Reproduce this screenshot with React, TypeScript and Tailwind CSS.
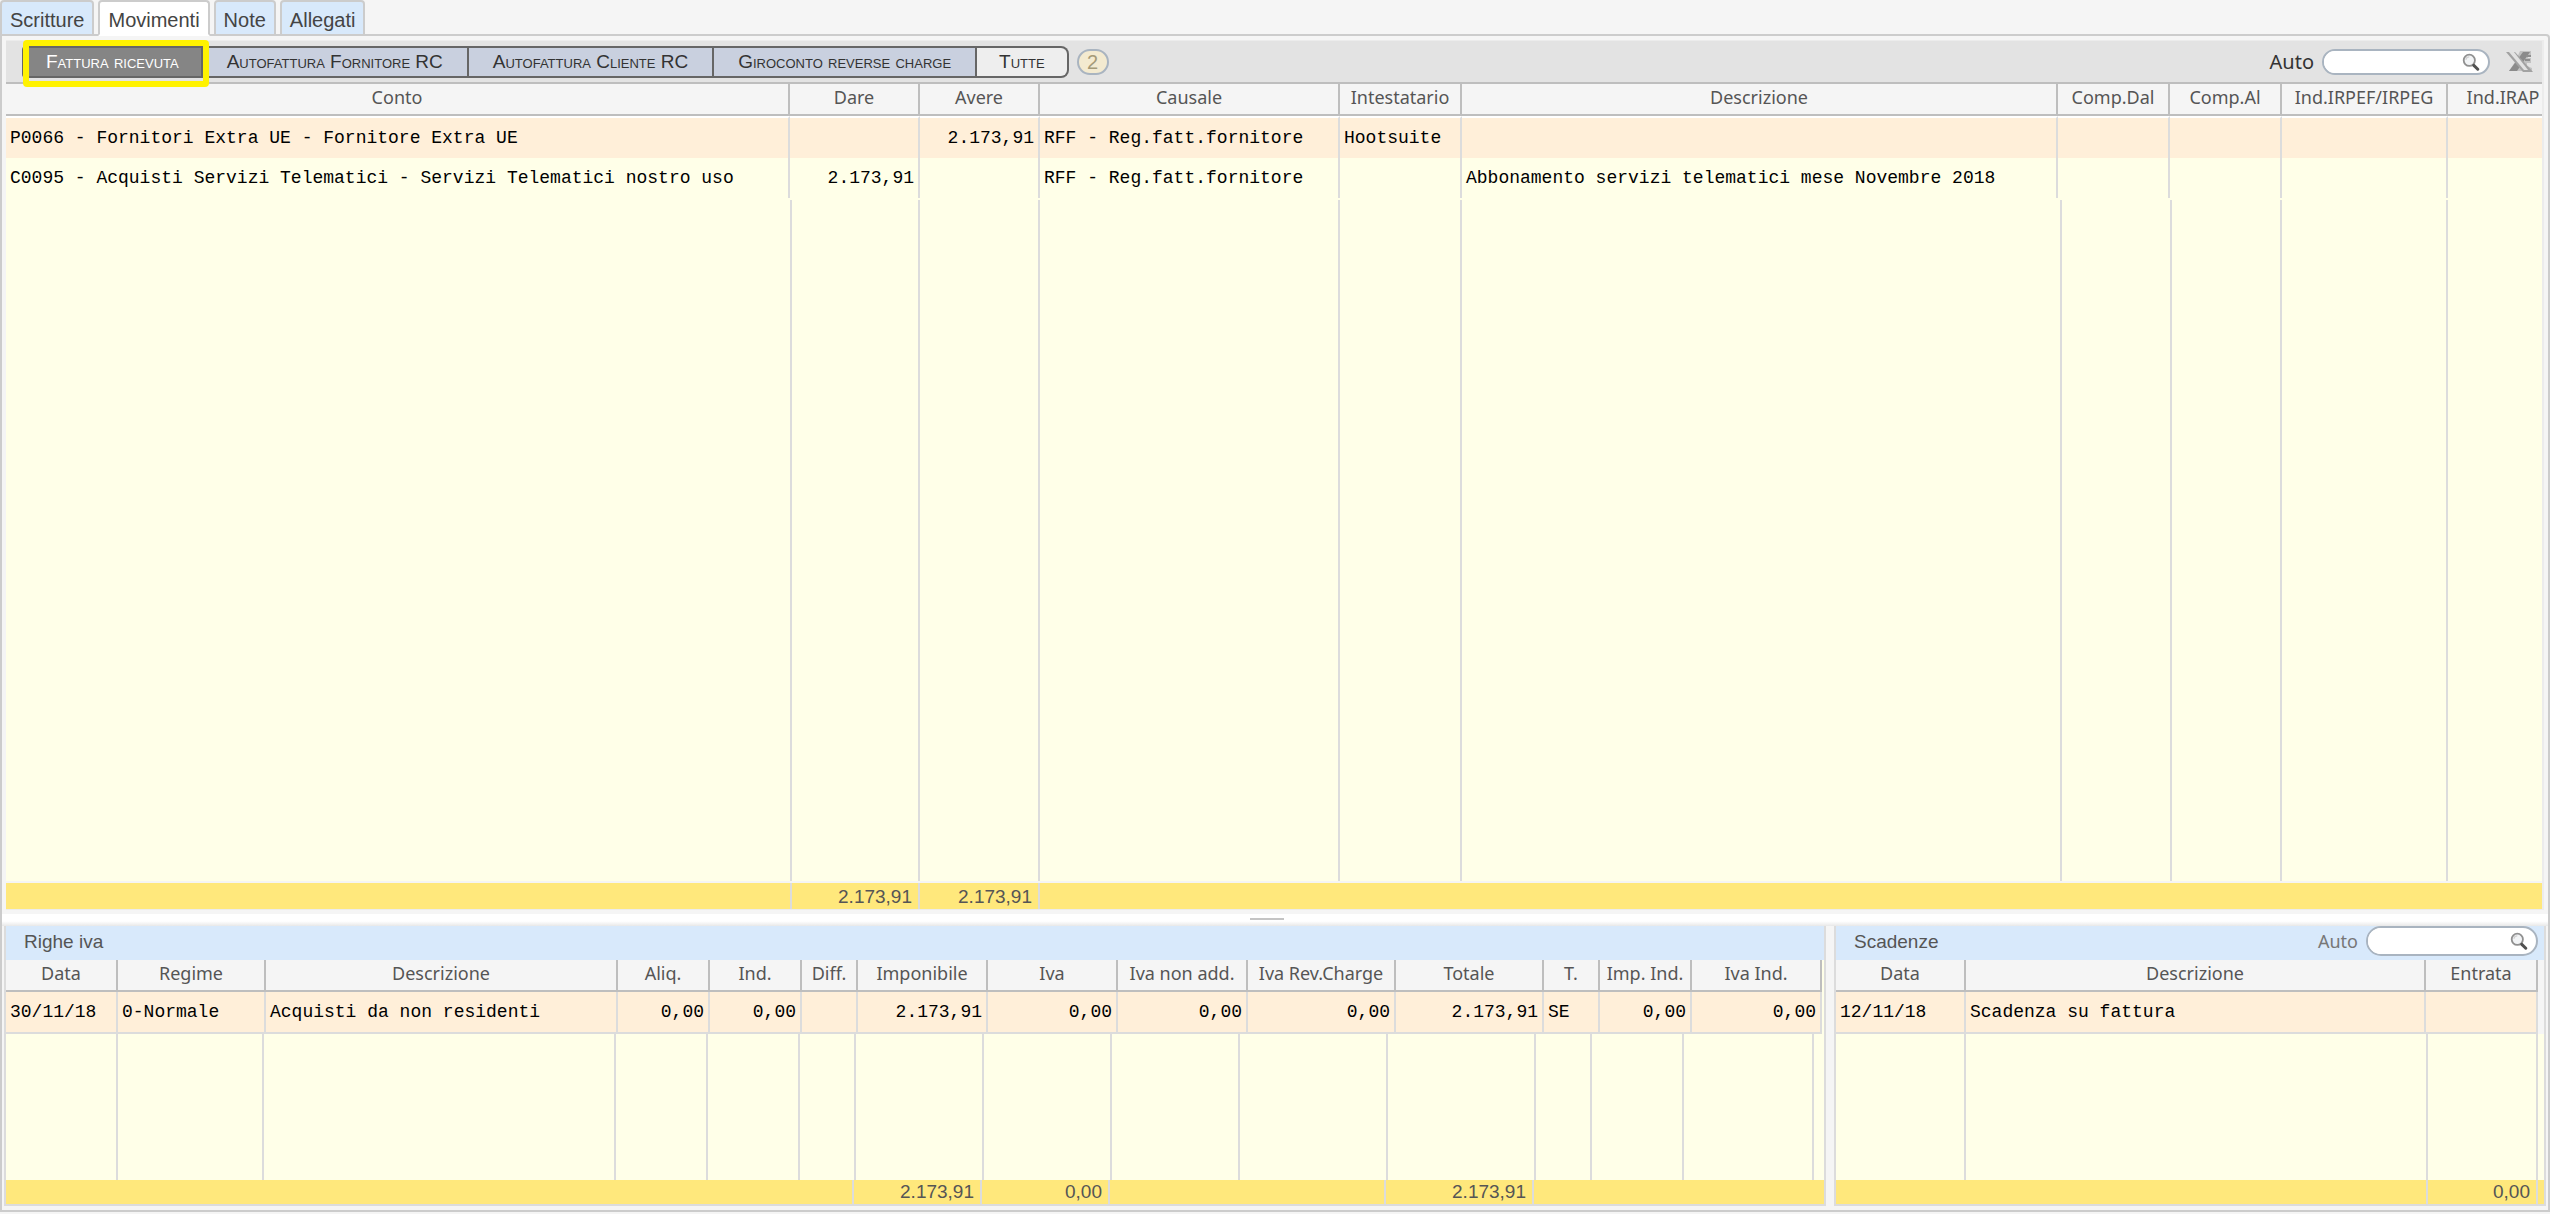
import clsx from "clsx";

type Align = "left" | "right";

interface Column {
  title: string;
  width?: number;
  align?: Align;
}

interface Slot {
  width?: number;
  value?: string;
  line?: boolean;
}

const tabs = ["Scritture", "Movimenti", "Note", "Allegati"];

const filters = ["Fattura ricevuta", "Autofattura Fornitore RC", "Autofattura Cliente RC", "Giroconto reverse charge", "Tutte"];

const movimentiColumns: Column[] = [
  { title: "Conto", width: 784 },
  { title: "Dare", width: 130, align: "right" },
  { title: "Avere", width: 120, align: "right" },
  { title: "Causale", width: 300 },
  { title: "Intestatario", width: 122 },
  { title: "Descrizione" },
  { title: "Comp.Dal", width: 112 },
  { title: "Comp.Al", width: 112 },
  { title: "Ind.IRPEF/IRPEG", width: 166 },
  { title: "Ind.IRAP", width: 94 },
];

const movimentiRows = [
  ["P0066 - Fornitori Extra UE - Fornitore Extra UE", "", "2.173,91", "RFF - Reg.fatt.fornitore", "Hootsuite", "", "", "", "", ""],
  ["C0095 - Acquisti Servizi Telematici - Servizi Telematici nostro uso", "2.173,91", "", "RFF - Reg.fatt.fornitore", "", "Abbonamento servizi telematici mese Novembre 2018", "", "", "", ""],
];

const movimentiFiller: Slot[] = [
  { width: 786 }, { width: 128 }, { width: 120 }, { width: 300 }, { width: 122 }, {},
  { width: 110 }, { width: 110 }, { width: 166 }, { width: 94, line: false },
];

const movimentiTotals: Slot[] = [
  { width: 786 }, { width: 128, value: "2.173,91" }, { width: 120, value: "2.173,91" }, { line: false },
];

const ivaColumns: Column[] = [
  { title: "Data", width: 112 },
  { title: "Regime", width: 148 },
  { title: "Descrizione" },
  { title: "Aliq.", width: 92, align: "right" },
  { title: "Ind.", width: 92, align: "right" },
  { title: "Diff.", width: 56 },
  { title: "Imponibile", width: 130, align: "right" },
  { title: "Iva", width: 130, align: "right" },
  { title: "Iva non add.", width: 130, align: "right" },
  { title: "Iva Rev.Charge", width: 148, align: "right" },
  { title: "Totale", width: 148, align: "right" },
  { title: "T.", width: 56 },
  { title: "Imp. Ind.", width: 92, align: "right" },
  { title: "Iva Ind.", width: 130, align: "right" },
];

const ivaRows = [
  ["30/11/18", "0-Normale", "Acquisti da non residenti", "0,00", "0,00", "", "2.173,91", "0,00", "0,00", "0,00", "2.173,91", "SE", "0,00", "0,00"],
];

const ivaFiller: Slot[] = [
  { width: 112 }, { width: 146 }, {}, { width: 92 }, { width: 92 }, { width: 56 }, { width: 128 }, { width: 128 },
  { width: 128 }, { width: 148 }, { width: 148 }, { width: 56 }, { width: 92 }, { width: 130 }, { width: 10, line: false },
];

const ivaTotals: Slot[] = [
  {}, { width: 128, value: "2.173,91" }, { width: 128, value: "0,00" }, { width: 276 },
  { width: 148, value: "2.173,91" }, { width: 290, line: false },
];

const scadenzeColumns: Column[] = [
  { title: "Data", width: 130 },
  { title: "Descrizione" },
  { title: "Entrata", width: 112, align: "right" },
];

const scadenzeRows = [["12/11/18", "Scadenza su fattura", ""]];

const scadenzeFiller: Slot[] = [{ width: 130 }, {}, { width: 110 }, { width: 6, line: false }];

const scadenzeTotals: Slot[] = [{}, { width: 110, value: "0,00" }, { width: 6, line: false }];

function DataTable({ columns, rows, label, ruled }: { columns: Column[]; rows: string[][]; label: string; ruled?: boolean }) {
  return (
    <table aria-label={label} className="w-full table-fixed border-separate border-spacing-0">
      <colgroup>
        {columns.map((column, index) => (
          <col key={index} style={{ width: column.width }} />
        ))}
      </colgroup>
      <thead>
        <tr className="h-8 bg-[#f5f5f5]">
          {columns.map((column, index) => (
            <th
              key={column.title}
              scope="col"
              className={clsx(
                "overflow-hidden border-b-2 border-[#bebebe] p-0 pb-1 text-center font-['Noto_Sans',sans-serif] text-lg leading-6 font-normal whitespace-nowrap text-[#555]",
                ruled || index < columns.length - 1 ? "border-r-2" : "pl-4"
              )}
            >
              {column.title}
            </th>
          ))}
        </tr>
      </thead>
      <tbody>
        {rows.map((row, rowIndex) => (
          <tr key={rowIndex} className={rowIndex % 2 === 0 ? "bg-[#ffefd9]" : "bg-[#ffffe8]"}>
            {row.map((cell, index) => (
              <td
                key={index}
                className={clsx(
                  "overflow-hidden border-[#dcdcdc] py-0 whitespace-nowrap",
                  ruled && "h-[42px] border-b-2",
                  !ruled && rowIndex === 0 && "h-[42px] border-t-2 border-t-white",
                  !ruled && rowIndex > 0 && "h-10",
                  (ruled || index < row.length - 1) && "border-r-2",
                  columns[index].align === "right" ? "pr-1 text-right" : "pl-1 text-left"
                )}
              >
                {cell}
              </td>
            ))}
          </tr>
        ))}
      </tbody>
    </table>
  );
}

function Filler({ slots, className }: { slots: Slot[]; className?: string }) {
  return (
    <div className={clsx("flex bg-[#ffffe8]", className)}>
      {slots.map((slot, index) => (
        <div
          key={index}
          className={clsx("border-[#dcdcdc]", slot.line !== false && "border-r-2", slot.width ? "shrink-0" : "flex-1")}
          style={{ width: slot.width }}
        />
      ))}
    </div>
  );
}

function Totals({ slots, className }: { slots: Slot[]; className?: string }) {
  return (
    <div className={clsx("flex bg-[#ffe87c] font-['Liberation_Sans',sans-serif] text-[19px] text-[#555]", className)}>
      {slots.map((slot, index) => (
        <div
          key={index}
          className={clsx(
            "border-[#dcdcdc]",
            slot.value && "pr-1.5 text-right",
            slot.line !== false && "border-r-2",
            slot.width ? "shrink-0" : "flex-1"
          )}
          style={{ width: slot.width }}
        >
          {slot.value}
        </div>
      ))}
    </div>
  );
}

function SearchIcon() {
  return (
    <svg viewBox="0 0 16 16" className="h-[18px] w-[18px] shrink-0" fill="none" aria-hidden="true">
      <circle cx="6.5" cy="6.5" r="5" fill="#f2f4f6" stroke="#909090" strokeWidth="1.6" />
      <path d="M3.5 6a3 3 0 0 1 3-2.5" stroke="#d0d0d0" strokeWidth="1.2" />
      <path d="M10.5 11l3.5 3.5" stroke="#505050" strokeWidth="2.6" strokeLinecap="round" />
    </svg>
  );
}

function ExcelIcon() {
  return (
    <svg viewBox="0 0 28 22" className="h-[22px] w-7" aria-hidden="true">
      <path d="M14 0h11v4h-3v3h3v5h-4v3l5 2v3H3l6-9z" fill="#c2c2c2" />
      <path d="M17 1h7L11 20H3z" fill="#8b8b8b" />
      <path d="M20 5h5M19 9h5" stroke="#8f8f8f" strokeWidth="2" />
      <path d="M0 1h9l18 20H17z" fill="#a2a2a2" />
      <path d="M3 1h5l14 18h-4z" fill="#e2e2e2" />
    </svg>
  );
}

function SearchBox({ id, className, boxClassName }: { id: string; className: string; boxClassName: string }) {
  return (
    <div className="flex items-center gap-2">
      <label htmlFor={id} className={className}>
        Auto
      </label>
      <div className={clsx("flex items-center rounded-full border-2 border-[#a9b4c0] bg-white pr-2", boxClassName)}>
        <input id={id} type="text" className="h-full w-full min-w-0 rounded-full bg-white pl-3 text-base outline-none" />
        <SearchIcon />
      </div>
    </div>
  );
}

export default function App() {
  return (
    <div className="flex min-h-screen flex-col bg-[#f5f5f5] pb-0.5 font-['Liberation_Mono',monospace] text-lg leading-6 text-black">
      <nav
        role="tablist"
        className="relative z-10 -mb-0.5 flex h-9 items-stretch gap-1 font-['Liberation_Sans',sans-serif] text-xl"
      >
        {tabs.map((tab) => (
          <button
            key={tab}
            role="tab"
            aria-selected={tab === "Movimenti"}
            className={clsx(
              "rounded-t border-2 border-[#ccc] px-2 pt-1 text-[#444]",
              tab === "Movimenti" ? "border-b-white bg-white" : "bg-[#d8e9fb]"
            )}
          >
            {tab}
          </button>
        ))}
      </nav>

      <main className="flex flex-1 flex-col rounded-tr border-2 border-[#ccc] pb-1">
        <section className="mx-1 mt-1 flex flex-1 flex-col border-y border-r-2 border-[#ececec]">
          <div className="flex h-[43px] items-center justify-between border-b-2 border-[#bebebe] bg-[#e3e3e3] pr-2 pl-4">
            <div className="flex items-center gap-2">
              <div className="flex h-8 font-['Liberation_Sans',sans-serif] text-[19px] [font-variant:small-caps]">
                {filters.map((filter, index) => (
                  <button
                    key={filter}
                    className={clsx(
                      "relative border-y-2 border-r-2 border-[#666]",
                      index === 0 && "rounded-l border-l-2 bg-[#858585] px-[22px] text-white",
                      index > 0 && index < 4 && "bg-[#c9d0df] px-6 text-[#333]",
                      index === 4 && "rounded-r-lg bg-[#eee] px-[22px] text-[#333]"
                    )}
                  >
                    {filter}
                    {index === 0 && (
                      <span className="absolute -top-2 -right-2 -bottom-[11px] -left-px z-10 rounded-sm border-[6px] border-[#fff200]" />
                    )}
                  </button>
                ))}
              </div>
              <span className="flex h-[26px] w-8 items-center justify-center rounded-full border-2 border-[#a9b4c0] bg-[#f3ead0] font-['Liberation_Sans',sans-serif] text-xl text-[#a59a78]">
                2
              </span>
            </div>
            <div className="flex items-center gap-4">
              <SearchBox
                id="cerca-movimenti"
                className="font-['Noto_Sans',sans-serif] text-xl text-[#333]"
                boxClassName="h-[26px] w-[168px]"
              />
              <button aria-label="Esporta in Excel">
                <ExcelIcon />
              </button>
            </div>
          </div>
          <DataTable label="Movimenti" columns={movimentiColumns} rows={movimentiRows} />
          <Filler slots={movimentiFiller} className="mb-0.5 flex-1 pt-0.5" />
          <Totals slots={movimentiTotals} className="h-[26px] leading-7" />
        </section>

        <div role="separator" className="mt-1 flex h-3 justify-center bg-linear-to-b from-white from-60% to-[#e8e8e8] pt-1 pr-4">
          <span className="h-0.5 w-[34px] bg-[#c4c4c4]" />
        </div>

        <div className="mx-0.5 flex gap-2">
          <section className="min-w-0 flex-1 border-x-2 border-b-2 border-[#dcdcdc]">
            <h2 className="h-[34px] bg-[#d8e9fb] pl-[18px] font-['Liberation_Sans',sans-serif] text-[19px] leading-8 text-[#555]">
              Righe iva
            </h2>
            <div className="bg-[#ffffe8] pr-0.5">
              <DataTable label="Righe iva" columns={ivaColumns} rows={ivaRows} ruled />
            </div>
            <Filler slots={ivaFiller} className="h-[146px]" />
            <Totals slots={ivaTotals} className="h-6 leading-6" />
          </section>
          <section className="w-[712px] border-x-2 border-b-2 border-[#dcdcdc]">
            <div className="flex h-[34px] items-start justify-between bg-[#d8e9fb] pr-1.5 pl-[18px] font-['Liberation_Sans',sans-serif] text-[19px] text-[#555]">
              <h2 className="leading-8">Scadenze</h2>
              <SearchBox
                id="cerca-scadenze"
                className="font-['Noto_Sans',sans-serif] text-lg text-[#777]"
                boxClassName="h-[30px] w-[172px]"
              />
            </div>
            <div className="bg-[#f5f5f5] pr-1.5">
              <DataTable label="Scadenze" columns={scadenzeColumns} rows={scadenzeRows} ruled />
            </div>
            <Filler slots={scadenzeFiller} className="h-[146px]" />
            <Totals slots={scadenzeTotals} className="h-6 leading-6" />
          </section>
        </div>
      </main>
    </div>
  );
}
